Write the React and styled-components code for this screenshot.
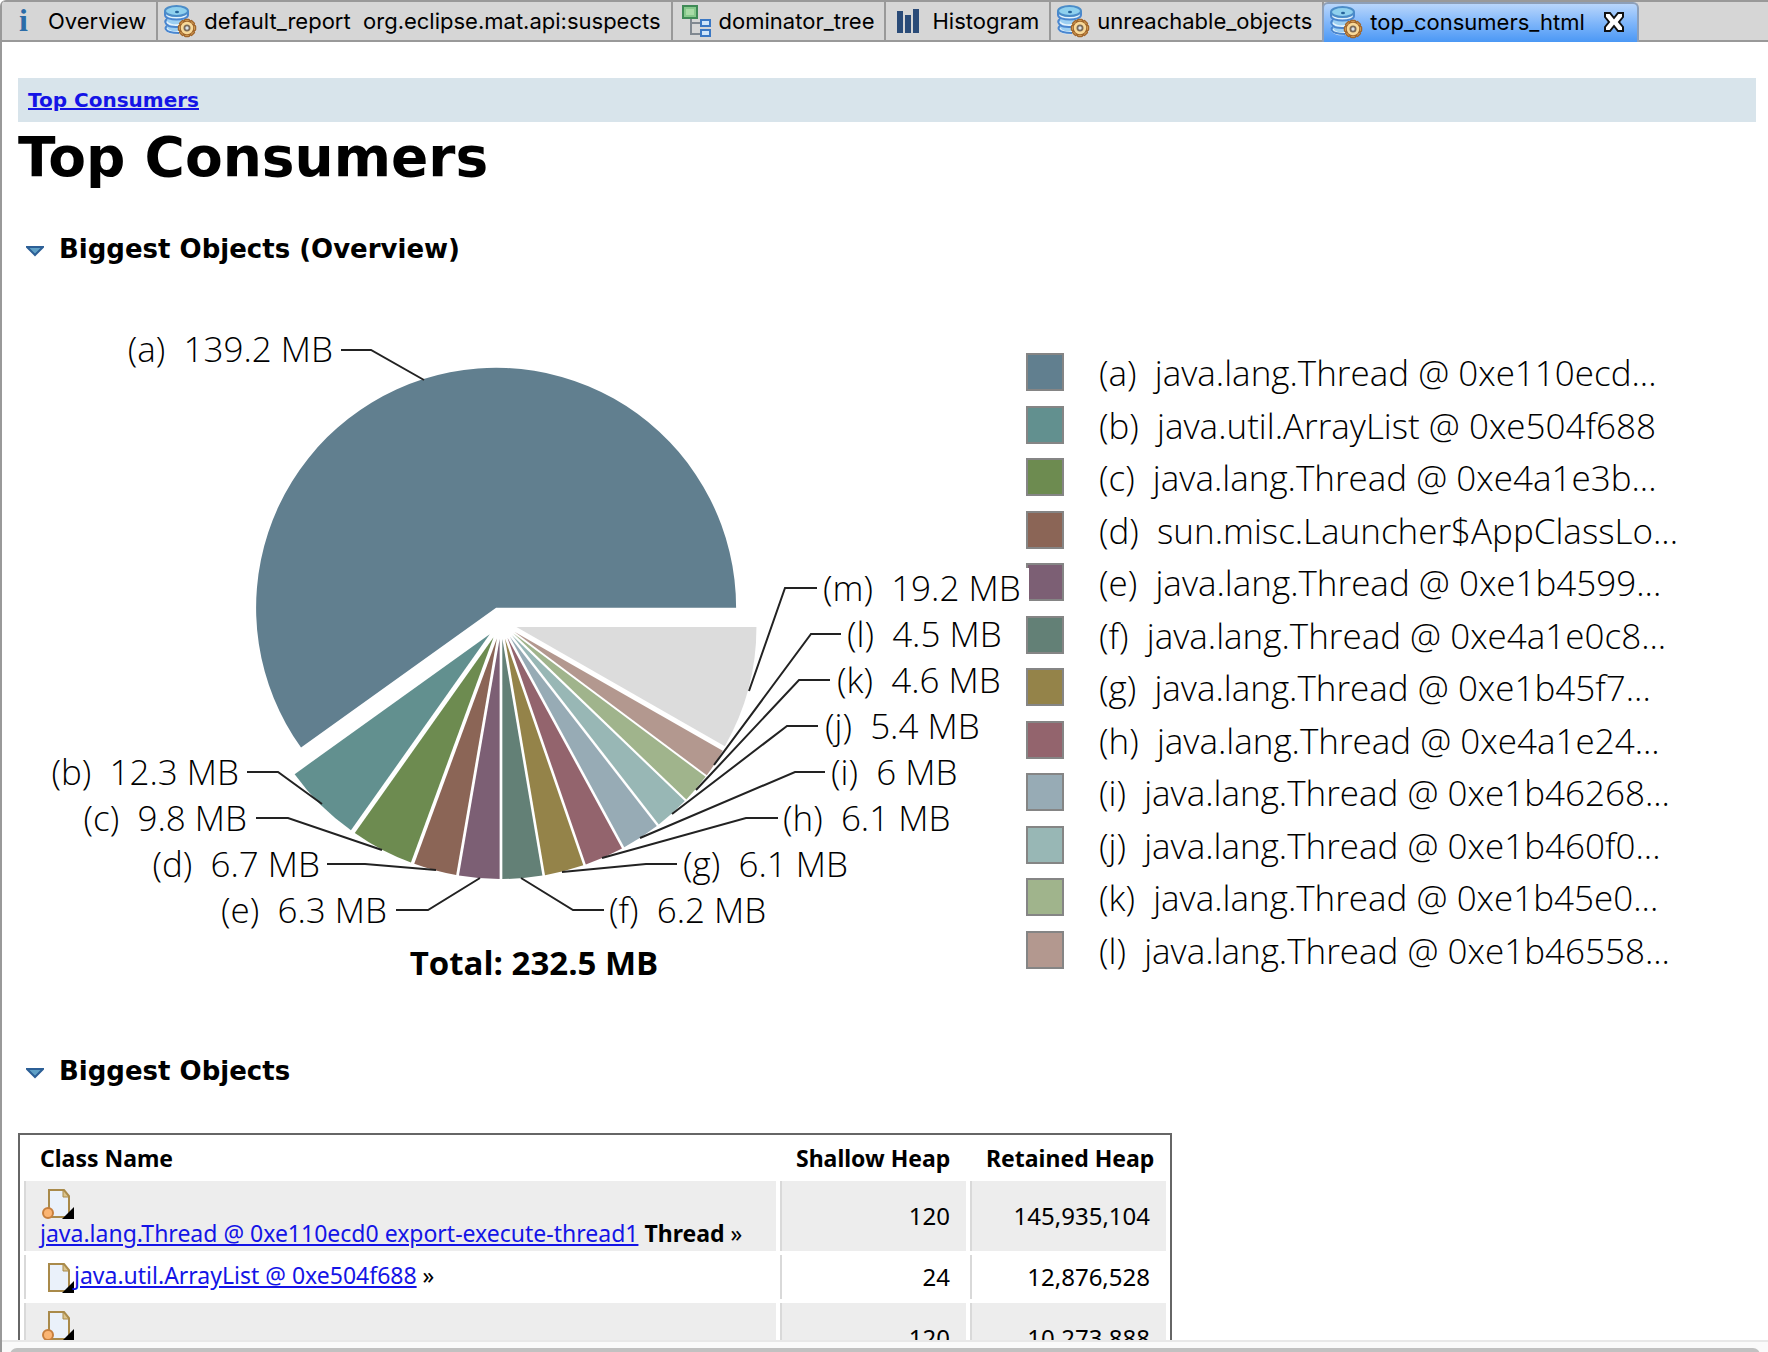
import { useState } from "react";
import styled, { createGlobalStyle } from "styled-components";

const GlobalStyle = createGlobalStyle`
  * {
    box-sizing: border-box;
  }
  body {
    margin: 0;
    background: #fff;
    color: #000;
  }
  button {
    border: 0;
    padding: 0;
    background: none;
    color: inherit;
    font: inherit;
    cursor: pointer;
  }
`

const FONT = {
  tab: `Inter, "Liberation Sans", sans-serif`,
  heading: `"DejaVu Sans", Verdana, sans-serif`,
  body: `"Noto Sans", "Open Sans", sans-serif`,
  chart: `"Open Sans", "Noto Sans", sans-serif`
}

const Editor = styled.div`
  display: flex;
  flex-direction: column;
  height: 100vh;
  overflow: hidden;
  border-left: 2px solid #999;
  border-top-left-radius: 6px;
`

const TabBar = styled.div`
  flex: none;
  display: flex;
  height: 42px;
  background: #d6d6d6;
  border-top: 2px solid #999;
  border-bottom: 2px solid #999;
`

const TabItem = styled.div`
  display: flex;
  align-items: center;
  height: 38px;
  padding: 0 10px 0 6px;
  border-right: 2px solid #999;
  ${props => props.$active && `
    height: 40px;
    padding: 0 12px 2px 6px;
    margin-left: -2px;
    border: 2px solid #8d9fb8;
    border-bottom: 0;
    border-radius: 6px 6px 0 0;
    background: linear-gradient(#b9d6fb, #7fb6fa 50%, #4b98f5);
  `}
`

const TabButton = styled.button`
  display: flex;
  align-items: center;
  gap: 8px;
  font-family: ${FONT.tab};
  font-size: 22px;
  line-height: 32px;
  white-space: pre;
  & > svg {
    flex: none;
    overflow: visible;
  }
`

const CloseBtn = styled.button`
  display: flex;
  margin-left: 18px;
`

const Content = styled.main`
  flex: 1;
  min-height: 0;
  overflow: hidden;
  padding: 36px 12px 0 16px;
`

const Breadcrumb = styled.nav`
  height: 44px;
  padding: 0 10px;
  background: #d8e4eb;
  font-family: ${FONT.heading};
  font-size: 20px;
  font-weight: bold;
  line-height: 44px;
`

const ReportLink = styled.a`
  color: #1414e6;
  text-decoration: underline;
`

const Title = styled.h1`
  margin: 0;
  font-family: ${FONT.heading};
  font-size: 55px;
  line-height: 70px;
`

const Section = styled.section`
  margin-top: ${props => props.$first ? "41px" : "0"};
`

const SectionTitle = styled.h2`
  margin: 0;
  font-family: ${FONT.heading};
  font-size: 26px;
  line-height: 32px;
  & > button {
    display: flex;
    align-items: center;
    gap: 15px;
    padding-left: 8px;
  }
`

const ChartRow = styled.div`
  display: flex;
  align-items: flex-start;
  height: 790px;
`

const PieSvg = styled.svg`
  position: relative;
  z-index: 1;
  flex: 0 1 1008px;
  min-width: 0;
  overflow: visible;
  font-family: ${FONT.chart};
  font-size: 35px;
  font-weight: 300;
  & text {
    white-space: pre;
  }
`

const Total = styled.text`
  font-size: 33px;
  font-weight: 700;
`

const Legend = styled.ul`
  display: flex;
  flex-direction: column;
  justify-content: space-between;
  flex: none;
  height: 618px;
  margin: 88px 0 0;
  padding: 0;
  list-style: none;
  font-family: ${FONT.chart};
  font-size: 35px;
  font-weight: 300;
  line-height: 40px;
  white-space: pre;
  & > li {
    display: flex;
    align-items: flex-start;
    gap: 35px;
  }
`

const Swatch = styled.span`
  width: 38px;
  height: 38px;
  border: 2px solid #858585;
  background: ${props => props.$color};
`

const ObjectTable = styled.table`
  width: 1154px;
  max-width: 100%;
  margin-top: 46px;
  border: 2px solid #666;
  border-collapse: separate;
  border-spacing: 4px;
  table-layout: fixed;
  font-family: ${FONT.body};
  font-size: 23px;
  line-height: 28px;
  white-space: nowrap;
`

const HeadCell = styled.th`
  width: ${props => props.$width};
  height: 38px;
  padding: 0 16px;
  text-align: ${props => props.$right ? "right" : "left"};
`

const Row = styled.tr`
  background: ${props => props.$odd ? "#ededed" : "#fff"};
`

const Cell = styled.td`
  height: 44px;
  padding: ${props => props.$stacked ? "6px 14px 4px" : "0 14px"};
  border-left: 2px solid #d9d9d9;
`

const NumberCell = styled(Cell)`
  padding-right: 16px;
  font-size: 24px;
  text-align: right;
`

const ObjectLine = styled.div`
  display: flex;
  flex-direction: ${props => props.$stacked ? "column" : "row"};
  align-items: flex-start;
  & > svg {
    flex: none;
    margin-left: 2px;
  }
`

const ScrollTrack = styled.div`
  flex: none;
  height: 12px;
  padding: 6px 8px 0;
  overflow: hidden;
  background: #fafafa;
  border-top: 2px solid #e8e8e8;
`

const ScrollThumb = styled.div`
  height: 14px;
  border-radius: 7px;
  background: #c1c1c1;
`

function InfoIcon() {
  return (
    <svg width="32" height="32" viewBox="0 0 32 32" aria-hidden="true">
      <text x="11" y="26" fontFamily="Liberation Serif, serif" fontWeight="bold" fontSize="32" fill="#2b6ca8">i</text>
    </svg>
  )
}

function ReportIcon() {
  const teeth = [0, 45, 90, 135, 180, 225, 270, 315]
  return (
    <svg width="32" height="32" viewBox="0 0 32 32" aria-hidden="true">
      <path d="M1 5v6c0 2 1 3 2 3-1 1-2 2-2 3v2c0 1 1 2 2 3-1 1-1 1-1 2 0 3 5 4 10 4l9-1V5z" fill="#9ccff2"/>
      <path d="M2 9c0 6 21 6 21 0M2 17c2 4 12 5 18 2M2 23c1 4 8 6 14 4" fill="none" stroke="#e4f3fc" strokeWidth="3"/>
      <path d="M1 6v4c0 6 23 6 23 0V6M3 14c-3 2-2 5 2 7 3 1 7 1 10 1M3 21c-3 2-1 5 3 6 3 1 6 1 9 1" fill="none" stroke="#4a86cf" strokeWidth="2"/>
      <ellipse cx="12.500" cy="6" rx="11.500" ry="5" fill="#8fd0ee" stroke="#4b8cc8" strokeWidth="2"/>
      <ellipse cx="13" cy="7" rx="2" ry="1.300" fill="#25639a"/>
      <g fill="#e9b566" stroke="#a0662c" strokeWidth="1.500">
        {teeth.map(angle => (
          <rect key={angle} x="20.500" y="14.500" width="5" height="5" rx="1" transform={`rotate(${angle} 23 23)`}/>
        ))}
        <circle cx="23" cy="23" r="6.500"/>
      </g>
      <circle cx="23" cy="23" r="6.200" fill="#f8d999"/>
      <circle cx="23" cy="23" r="2.600" fill="#d9e2ea" stroke="#7b6a58" strokeWidth="1.800"/>
    </svg>
  )
}

function TreeIcon() {
  return (
    <svg width="32" height="32" viewBox="0 0 32 32" aria-hidden="true">
      <path d="M12 13v16h10M12 18h10" fill="none" stroke="#808890" strokeWidth="2"/>
      <rect x="4" y="1" width="14" height="12" fill="#86c98b" stroke="#3f8a56" strokeWidth="2"/>
      <rect x="7" y="4" width="8" height="6" fill="#a8dba6"/>
      <rect x="22" y="15" width="9" height="6" fill="#cfe5fa" stroke="#3b78c4" strokeWidth="2"/>
      <rect x="22" y="25" width="9" height="6" fill="#cfe5fa" stroke="#3b78c4" strokeWidth="2"/>
    </svg>
  )
}

function HistogramIcon() {
  return (
    <svg width="32" height="32" viewBox="0 0 32 32" fill="#2a4b78" aria-hidden="true">
      <rect x="5" y="6" width="6" height="22"/>
      <rect x="13" y="10" width="6" height="18"/>
      <rect x="21" y="4" width="6" height="24"/>
    </svg>
  )
}

function CloseIcon() {
  return (
    <svg width="22" height="22" viewBox="0 0 22 22" aria-hidden="true">
      <path d="M2 2h5l4 5 4-5h5v4l-4 5 4 5v4h-5l-4-5-4 5H2v-4l4-5-4-5z" fill="#fff" stroke="#111" strokeWidth="2"/>
    </svg>
  )
}

function ArrowIcon() {
  return (
    <svg width="18" height="16" viewBox="0 0 18 16" aria-hidden="true">
      <path d="M1 6h16l-8 8z" fill="#5fa0c6" stroke="#2c5f96" strokeWidth="2"/>
    </svg>
  )
}

function ObjectIcon({ root }) {
  return (
    <svg width="32" height="32" viewBox="0 0 32 32" aria-hidden="true">
      <path d="M7 3h15l5 6v21H7z" fill="#eaf1fa" stroke="#a98a4a" strokeWidth="2"/>
      <path d="M21 3v7h6z" fill="#dcc48c" stroke="#a98a4a" strokeWidth="1"/>
      {root && <circle cx="6" cy="26" r="5" fill="#fbb573" stroke="#c77f3d" strokeWidth="2"/>}
      <path d="M32 20v12H20z" fill="#000"/>
    </svg>
  )
}

const tabs = [
  { title: "Overview", icon: InfoIcon },
  { title: "default_report  org.eclipse.mat.api:suspects", icon: ReportIcon },
  { title: "dominator_tree", icon: TreeIcon },
  { title: "Histogram", icon: HistogramIcon },
  { title: "unreachable_objects", icon: ReportIcon },
  { title: "top_consumers_html", icon: ReportIcon, active: true }
]

// line: pie edge, elbow, label end
const slices = [
  { id: "a", size: 139.2, color: "#617f8f", name: "java.lang.Thread @ 0xe110ecd...", line: "424,380 371,350 341,350", x: 333, y: 362, left: true },
  { id: "b", size: 12.3, color: "#62908f", name: "java.util.ArrayList @ 0xe504f688", line: "322,804 278,772 247,772", x: 239, y: 785, left: true },
  { id: "c", size: 9.8, color: "#6d8b50", name: "java.lang.Thread @ 0xe4a1e3b...", line: "382,850 288,818 256,818", x: 247, y: 831, left: true },
  { id: "d", size: 6.7, color: "#8b6556", name: "sun.misc.Launcher$AppClassLo...", line: "436,870 365,864 327,864", x: 320, y: 877, left: true },
  { id: "e", size: 6.3, color: "#7c5f74", name: "java.lang.Thread @ 0xe1b4599...", line: "480,878 428,910 396,910", x: 387, y: 923, left: true },
  { id: "f", size: 6.2, color: "#638076", name: "java.lang.Thread @ 0xe4a1e0c8...", line: "521,878 573,910 604,910", x: 609, y: 923 },
  { id: "g", size: 6.1, color: "#948349", name: "java.lang.Thread @ 0xe1b45f7...", line: "562,872 646,864 677,864", x: 683, y: 877 },
  { id: "h", size: 6.1, color: "#93646d", name: "java.lang.Thread @ 0xe4a1e24...", line: "602,858 746,818 778,818", x: 783, y: 831 },
  { id: "i", size: 6, color: "#97abb5", name: "java.lang.Thread @ 0xe1b46268...", line: "640,838 795,772 825,772", x: 831, y: 785 },
  { id: "j", size: 5.4, color: "#98b7b5", name: "java.lang.Thread @ 0xe1b460f0...", line: "672,814 787,726 818,726", x: 825, y: 739 },
  { id: "k", size: 4.6, color: "#a0b48c", name: "java.lang.Thread @ 0xe1b45e0...", line: "696,790 799,680 830,680", x: 837, y: 693 },
  { id: "l", size: 4.5, color: "#b3988f", name: "java.lang.Thread @ 0xe1b46558...", line: "714,765 811,634 841,634", x: 847, y: 647 },
  { id: "m", size: 19.2, color: "#dcdcdc", line: "749,691 785,588 817,588", x: 823, y: 601 }
]

const objects = [
  { name: "java.lang.Thread @ 0xe110ecd0 export-execute-thread1", type: "Thread", shallow: "120", retained: "145,935,104" },
  { name: "java.util.ArrayList @ 0xe504f688", shallow: "24", retained: "12,876,528" },
  { name: "java.lang.Thread @ 0xe4a1e3b0", type: "Thread", shallow: "120", retained: "10,273,888" }
]

const CENTER = { x: 501, y: 623 }
const RADIUS = 240
const OFFSET = 16

// slices run counter-clockwise from three o'clock, each pushed out from the centre
function getSlicePaths() {
  const total = slices.reduce((sum, slice) => sum + slice.size, 0)
  let start = 0
  return slices.map(slice => {
    const end = start - slice.size / total * Math.PI * 2
    const middle = (start + end) / 2
    const cx = CENTER.x + OFFSET * Math.cos(middle)
    const cy = CENTER.y + OFFSET * Math.sin(middle)
    const point = angle => `${cx + RADIUS * Math.cos(angle)} ${cy + RADIUS * Math.sin(angle)}`
    const large = start - end > Math.PI ? 1 : 0
    const d = `M${cx} ${cy}L${point(start)}A${RADIUS} ${RADIUS} 0 ${large} 0 ${point(end)}Z`
    start = end
    return { ...slice, d }
  })
}

function PieChart() {
  return (
    <PieSvg viewBox="18 265 1008 790" role="img" aria-label="Biggest objects by retained heap">
      {getSlicePaths().map(slice => <path key={slice.id} d={slice.d} fill={slice.color}/>)}
      <rect x="820" y="568" width="209" height="40" fill="#fff"/>
      {slices.map(slice => (
        <g key={slice.id}>
          <polyline points={slice.line} fill="none" stroke="#222" strokeWidth="2"/>
          <text x={slice.x} y={slice.y} textAnchor={slice.left ? "end" : "start"}>
            {`(${slice.id})  ${slice.size} MB`}
          </text>
        </g>
      ))}
      <Total x="534" y="975" textAnchor="middle">Total: 232.5 MB</Total>
    </PieSvg>
  )
}

function ReportSection({ title, first, children }) {
  const [open, setOpen] = useState(true)
  return (
    <Section $first={first}>
      <SectionTitle>
        <button type="button" aria-expanded={open} onClick={() => setOpen(!open)}>
          <ArrowIcon/>
          {title}
        </button>
      </SectionTitle>
      {open && children}
    </Section>
  )
}

function Tabs() {
  return (
    <TabBar>
      {tabs.map(({ title, icon: Icon, active }) => (
        <TabItem key={title} $active={active}>
          <TabButton type="button">
            <Icon/>
            {title}
          </TabButton>
          {active && <CloseBtn type="button" aria-label="Close"><CloseIcon/></CloseBtn>}
        </TabItem>
      ))}
    </TabBar>
  )
}

export default function App() {
  return (
    <Editor>
      <GlobalStyle/>
      <Tabs/>
      <Content>
        <Breadcrumb>
          <ReportLink href="#">Top Consumers</ReportLink>
        </Breadcrumb>
        <Title>Top Consumers</Title>
        <ReportSection title="Biggest Objects (Overview)" first>
          <ChartRow>
            <PieChart/>
            <Legend>
              {slices.filter(slice => slice.name).map(slice => (
                <li key={slice.id}>
                  <Swatch $color={slice.color}/>
                  <span>{`(${slice.id})  ${slice.name}`}</span>
                </li>
              ))}
            </Legend>
          </ChartRow>
        </ReportSection>
        <ReportSection title="Biggest Objects">
          <ObjectTable>
            <thead>
              <tr>
                <HeadCell>Class Name</HeadCell>
                <HeadCell $width="186px" $right>Shallow Heap</HeadCell>
                <HeadCell $width="196px" $right>Retained Heap</HeadCell>
              </tr>
            </thead>
            <tbody>
              {objects.map((object, index) => (
                <Row key={object.name} $odd={index % 2 === 0}>
                  <Cell $stacked={object.type}>
                    <ObjectLine $stacked={object.type}>
                      <ObjectIcon root={object.type}/>
                      <span>
                        <ReportLink href="#">{object.name}</ReportLink>
                        {object.type && <strong> {object.type}</strong>} »
                      </span>
                    </ObjectLine>
                  </Cell>
                  <NumberCell>{object.shallow}</NumberCell>
                  <NumberCell>{object.retained}</NumberCell>
                </Row>
              ))}
            </tbody>
          </ObjectTable>
        </ReportSection>
      </Content>
      <ScrollTrack>
        <ScrollThumb/>
      </ScrollTrack>
    </Editor>
  )
}
